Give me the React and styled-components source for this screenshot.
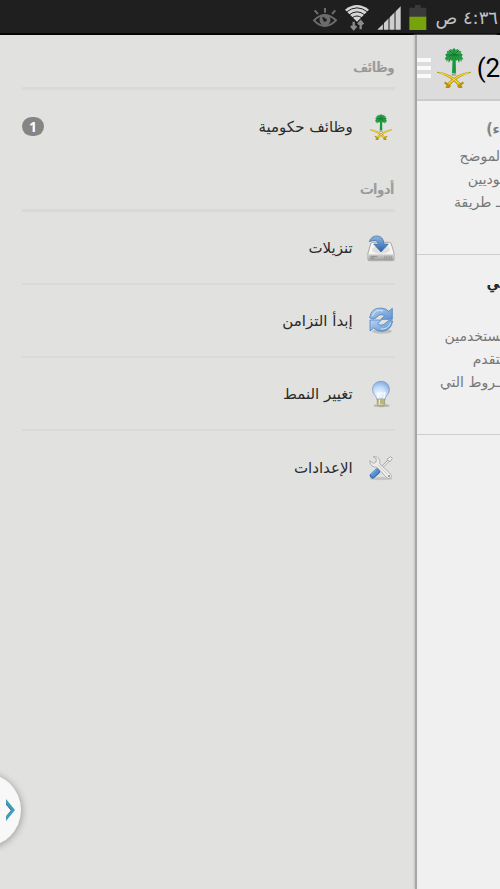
import * as React from "react";
import styled, { createGlobalStyle } from "styled-components";

const GlobalStyle = createGlobalStyle`
  *, *::before, *::after {
    box-sizing: border-box;
  }
  body {
    margin: 0;
    background: #e1e1df;
    font-family: "DejaVu Sans", "Noto Sans", sans-serif;
  }
  button {
    border: 0;
    padding: 0;
    background: none;
    font: inherit;
    cursor: pointer;
  }
`;

const Screen = styled.div`
  position: relative;
  display: flex;
  flex-direction: column;
  min-height: 100vh;
  overflow: hidden;
`;

const StatusBar = styled.header`
  display: flex;
  align-items: center;
  justify-content: flex-end;
  gap: 8px;
  height: 35px;
  padding: 2px 2px 0 0;
  background: #1f1f1f;
  border-bottom: 2px solid #050505;
  color: #c2c2c2;
  svg {
    flex: none;
  }
`;

const Clock = styled.time`
  font-size: 18px;
  line-height: 24px;
  white-space: nowrap;
`;

const Panels = styled.div`
  flex: 1;
  display: grid;
  grid-template-columns: 5fr 1fr;
`;

const Drawer = styled.nav`
  padding: 6px 22px 0;
  background: #e1e1df;
`;

const SectionTitle = styled.h2`
  margin: 0;
  height: 49px;
  padding-top: 14px;
  border-bottom: 3px solid #d9d9d7;
  color: #999;
  font-size: 14px;
  font-weight: 400;
  line-height: 24px;
  text-shadow: -1px 0 #999;
`;

const Menu = styled.ul`
  margin: 0;
  padding: 0;
  list-style: none;
`;

const MenuItem = styled.li`
  height: 73px;
  &:not(:last-child) {
    border-bottom: 2px solid #dadad8;
  }
`;

const MenuLink = styled.a`
  display: flex;
  align-items: center;
  gap: 14px;
  height: 100%;
  color: #2b2b2b;
  font-size: 15px;
  line-height: 24px;
  text-decoration: none;
`;

const Badge = styled.span`
  margin-right: auto;
  width: 22px;
  border-radius: 10px;
  background: #858585;
  color: #fff;
  font-family: "Open Sans", sans-serif;
  font-size: 14px;
  font-weight: 700;
  line-height: 19px;
  text-align: center;
`;

const Page = styled.main`
  min-width: 0;
  overflow: hidden;
  background: #f0f0f0;
  box-shadow: -2px 0 0 #a6a6a4, -3px 0 2px #c4c4c2;
`;

const ActionBar = styled.div`
  direction: ltr;
  display: flex;
  align-items: center;
  gap: 6px;
  height: 66px;
  padding-top: 2px;
  background: #dcdcdc;
  border-bottom: 2px solid #cbcbcb;
  svg {
    flex: none;
  }
`;

const MenuButton = styled.button`
  flex: none;
  display: grid;
  gap: 4px;
  width: 14px;
  span {
    height: 4px;
    background: #fafafa;
  }
`;

const PageTitle = styled.h1`
  margin: 0;
  color: #000;
  font-family: Roboto, sans-serif;
  font-size: 26px;
  font-weight: 400;
  line-height: 32px;
`;

const Article = styled.article`
  padding: 15px 0 40px;
  border-bottom: 1px solid #cfcfcf;
  white-space: nowrap;
`;

const ArticleTitle = styled.h3`
  margin: 0 0 3px;
  min-height: ${(p) => p.$lines * 26}px;
  color: ${(p) => (p.$read ? "#777" : "#222")};
  font-size: 15px;
  font-weight: 400;
  line-height: 26px;
  text-shadow: -1px 0 ${(p) => (p.$read ? "#999" : "#222")};
`;

const Summary = styled.p`
  margin: 0;
  color: #777;
  font-size: 14px;
  line-height: 23px;
`;

const Handle = styled.button`
  position: absolute;
  left: -53px;
  bottom: 42px;
  display: flex;
  align-items: center;
  justify-content: flex-end;
  width: 74px;
  height: 74px;
  padding: 0 6px;
  border-radius: 50%;
  background: #f8f8f8;
  box-shadow: 1px 1px 7px rgba(0, 0, 0, 0.3);
`;

const EyeIcon = () => (
  <svg width="24" height="20" viewBox="0 0 72 60" fill="none" stroke="#6c6c6c">
    <path d="M3 37Q35 5 69 37Q35 71 3 37Z" strokeWidth="6" />
    <circle cx="36" cy="36" r="11" strokeWidth="11" />
    <path d="M37 37l-8-9" stroke="#1f1f1f" strokeWidth="6" />
    <path d="M5 7l10 11M36 0v14M67 7L57 18" strokeWidth="6" />
  </svg>
);

const WifiIcon = () => (
  <svg width="24" height="26" viewBox="0 0 72 78" fill="none">
    <path d="M0 14Q36-14 72 14L36 50Z" fill="#d6d6d6" />
    <path
      d="M4 21Q36-4 68 21M12 30Q36 11 60 30M20 39Q36 27 52 39"
      stroke="#1f1f1f"
      strokeWidth="3"
    />
    <path
      d="M26 50v22M18 63l8 9 8-9M47 73V49M39 58l8-9 8 9"
      stroke="#8c8c8c"
      strokeWidth="7"
    />
  </svg>
);

const SignalIcon = () => (
  <svg width="24" height="24" viewBox="0 0 72 72">
    <path d="M1 71L71 1V71Z" fill="#cecece" />
    <path d="M19 50v22M36 32v40M54 14v58" stroke="#1f1f1f" strokeWidth="3" />
  </svg>
);

const BatteryIcon = () => (
  <svg width="18" height="25" viewBox="0 0 54 75">
    <path d="M18 0h17v8h17v27H1V8h17Z" fill="#3a3a3a" />
    <path d="M1 35h51v40H1Z" fill="#76a30c" />
  </svg>
);

const EmblemIcon = ({ width, height }) => (
  <svg width={width} height={height} viewBox="0 0 104 122" fill="none">
    <path d="M48 22h9l1 55H46Z" fill="#149a3c" />
    <path
      d="M52 0L47 5L40 3L38 9L30 9L31 16L25 20L28 26L23 34L29 35L28 43L35 36L36 46L42 35L46 41L52 30L58 41L62 35L68 46L69 36L76 43L75 35L81 34L76 26L79 20L73 16L74 9L66 9L64 3L57 5Z"
      fill="#35a04e"
    />
    <path
      d="M52 20L36 6M52 20L68 6M52 20V2M52 20L28 21M52 20L76 21M52 20Q38 20 28 34M52 20Q66 20 76 34M52 20Q41 22 37 41M52 20Q63 22 67 41M52 20L45 36M52 20L59 36"
      stroke="#0d802e"
      strokeWidth="3"
    />
    <path d="M45 79q7-7 14 0v6H45Z" fill="#a8a49a" />
    <path
      d="M1 74Q40 76 76 112L70 119Q40 84 1 74ZM103 74Q64 76 28 112L34 119Q64 84 103 74Z"
      fill="#e2bd0b"
      stroke="#a98300"
      strokeWidth="2"
    />
    <path
      d="M23 105l14 9M81 105l-14 9M27 118q10 5 13-4M77 118q-10 5-13-4"
      stroke="#b88e04"
      strokeWidth="6"
    />
    <path d="M7 75Q43 84 69 110M97 75Q61 84 35 110" stroke="#f7de38" strokeWidth="3" />
  </svg>
);

const DownloadIcon = () => (
  <svg width="28" height="28" viewBox="0 0 84 84">
    <defs>
      <linearGradient id="front" x2="0" y2="1">
        <stop stopColor="#d2d2d0" />
        <stop offset="1" stopColor="#9d9d9b" />
      </linearGradient>
      <linearGradient id="arrow" x2="0" y2="1">
        <stop stopColor="#8eb5e0" />
        <stop offset="1" stopColor="#2862ad" />
      </linearGradient>
    </defs>
    <path
      d="M17 25h50q4 0 6 5l8 27v20q0 3-3 3H6q-3 0-3-3V57l8-27q2-5 6-5Z"
      fill="#f5f5f4"
      stroke="#858583"
      strokeWidth="2"
    />
    <ellipse cx="42" cy="47" rx="27" ry="12" fill="#dfdfdd" />
    <path d="M4 61h76v15q0 3-3 3H7q-3 0-3-3Z" fill="url(#front)" />
    <path d="M11 67h20M11 72h12" stroke="#777" strokeWidth="2" />
    <path
      d="M53 65v11M58 65v11M63 65v11M68 65v11M73 65v11"
      stroke="#92928f"
      strokeWidth="2"
    />
    <path
      d="M7 23Q13 5 30 6Q49 6 51 30h13L42 54L20 30h14Q32 13 7 23Z"
      fill="url(#arrow)"
      stroke="#3569aa"
      strokeWidth="2"
    />
  </svg>
);

const SyncIcon = () => (
  <svg width="28" height="28" viewBox="0 0 84 84">
    <defs>
      <linearGradient id="sync" x2="1" y2="1">
        <stop stopColor="#b8d5f2" />
        <stop offset="1" stopColor="#5b90d0" />
      </linearGradient>
    </defs>
    <ellipse cx="45" cy="73" rx="30" ry="7" fill="#000" opacity="0.15" />
    <g fill="url(#sync)" stroke="#3e73b5" strokeWidth="2">
      <path d="M8 32Q12 3 41 3Q56 3 65 13L76 4V37H42L53 26Q38 18 28 32Q18 40 8 32Z" />
      <path d="M77 42Q73 70 46 73Q31 74 20 63L9 72V39H43L32 50Q44 60 57 47Q66 36 77 42Z" />
    </g>
    <path
      d="M16 27Q25 5 48 12M71 48Q62 68 41 66"
      fill="none"
      stroke="#d5e7fa"
      strokeWidth="3"
    />
  </svg>
);

const BulbIcon = () => (
  <svg width="28" height="28" viewBox="0 0 84 84">
    <defs>
      <radialGradient id="glass" cx="0.4" cy="0.75" r="0.8">
        <stop stopColor="#f6faff" />
        <stop offset="0.5" stopColor="#c8dffc" />
        <stop offset="1" stopColor="#78a7e4" />
      </radialGradient>
    </defs>
    <ellipse cx="44" cy="77" rx="24" ry="5" fill="#000" opacity="0.2" />
    <path
      d="M42 4C23 4 13 20 18 36C21 46 29 49 30 59H54C55 49 63 46 66 36C71 20 61 4 42 4Z"
      fill="url(#glass)"
      stroke="#7891b8"
      strokeWidth="2"
    />
    <path
      d="M34 57l-3-20 7 5 5-6 5 6 6-5-4 20"
      fill="none"
      stroke="#fff"
      strokeWidth="3"
    />
    <path
      d="M31 57h22v15q-3 6-11 6t-11-6Z"
      fill="#d1cf92"
      stroke="#8b8960"
      strokeWidth="2"
    />
    <path d="M32 63h20M32 69h20" stroke="#8c8a62" strokeWidth="2" />
    <path d="M37 59v15" stroke="#f8f7d6" strokeWidth="3" />
  </svg>
);

const ToolsIcon = () => (
  <svg width="28" height="28" viewBox="0 0 84 84" strokeLinecap="round">
    <ellipse cx="42" cy="74" rx="34" ry="5" fill="#000" opacity="0.12" />
    <path d="M68 17L36 48" stroke="#8c8c8c" strokeWidth="7" />
    <path d="M68 17L36 48" stroke="#eee" strokeWidth="4" />
    <path d="M61 15l10-7 5 5-7 10Z" fill="#f2f2f2" stroke="#888" strokeWidth="2" />
    <path d="M31 52L17 65" stroke="#3a6fb0" strokeWidth="17" />
    <path d="M30 51L17 63" stroke="#578fd0" strokeWidth="12" />
    <path d="M27 48L13 60" stroke="#8bb6e6" strokeWidth="3" />
    <path
      d="M20 8Q35 6 39 21L38 29L68 57Q78 65 72 71Q66 77 58 70L29 39Q11 42 8 20L19 28L27 24L28 16Z"
      fill="#ececeb"
      stroke="#959595"
      strokeWidth="2"
    />
    <path d="M34 33l27 28" stroke="#cfcfcf" strokeWidth="3" />
    <circle cx="66" cy="66" r="3" fill="#888" />
  </svg>
);

const ChevronIcon = () => (
  <svg width="9" height="22" viewBox="0 0 9 22">
    <path d="M0 0L9 11L0 22V17L5 11L0 5Z" fill="#3f9cbb" />
    <path d="M0 5L5 11" stroke="#21708e" fill="none" />
  </svg>
);

const IconSlot = styled.span`
  display: flex;
  justify-content: center;
  width: 28px;
`;

const TOOLS = [
  { id: "downloads", label: "تنزيلات", icon: <DownloadIcon /> },
  { id: "sync", label: "إبدأ التزامن", icon: <SyncIcon /> },
  { id: "theme", label: "تغيير النمط", icon: <BulbIcon /> },
  { id: "settings", label: "الإعدادات", icon: <ToolsIcon /> },
];

const ARTICLES = [
  {
    id: 1,
    title: "ء)",
    titleLines: 1,
    read: true,
    lines: ["لموضح", "\u200dوديين", "ـ طريقة"],
  },
  {
    id: 2,
    title: "\u200dي",
    titleLines: 2,
    read: false,
    lines: ["\u200dستخدمين", "\u200dتقدم", "ـروط التي"],
  },
];

const Entry = ({ id, label, icon, count }) => (
  <MenuItem>
    <MenuLink href={`#${id}`}>
      <IconSlot>{icon}</IconSlot>
      <span>{label}</span>
      {count && <Badge>{count}</Badge>}
    </MenuLink>
  </MenuItem>
);

const App = () => {
  return (
    <Screen lang="ar">
      <GlobalStyle />
      <StatusBar>
        <EyeIcon />
        <WifiIcon />
        <SignalIcon />
        <BatteryIcon />
        <Clock dir="rtl">٤:٣٦ ص</Clock>
      </StatusBar>
      <Panels>
        <Drawer dir="rtl">
          <SectionTitle>وظائف</SectionTitle>
          <Menu>
            <Entry
              id="jobs"
              label="وظائف حكومية"
              icon={<EmblemIcon width={22} height={26} />}
              count={1}
            />
          </Menu>
          <SectionTitle>أدوات</SectionTitle>
          <Menu>
            {TOOLS.map((tool) => (
              <Entry key={tool.id} {...tool} />
            ))}
          </Menu>
        </Drawer>
        <Page dir="rtl">
          <ActionBar>
            <MenuButton aria-label="القائمة">
              <span />
              <span />
              <span />
            </MenuButton>
            <EmblemIcon width={34} height={40} />
            <PageTitle>(2</PageTitle>
          </ActionBar>
          {ARTICLES.map((article) => (
            <Article key={article.id}>
              <ArticleTitle $lines={article.titleLines} $read={article.read}>
                {article.title}
              </ArticleTitle>
              {article.lines.map((line) => (
                <Summary key={line}>{line}</Summary>
              ))}
            </Article>
          ))}
        </Page>
      </Panels>
      <Handle aria-label="فتح">
        <ChevronIcon />
      </Handle>
    </Screen>
  );
};

export default App;
